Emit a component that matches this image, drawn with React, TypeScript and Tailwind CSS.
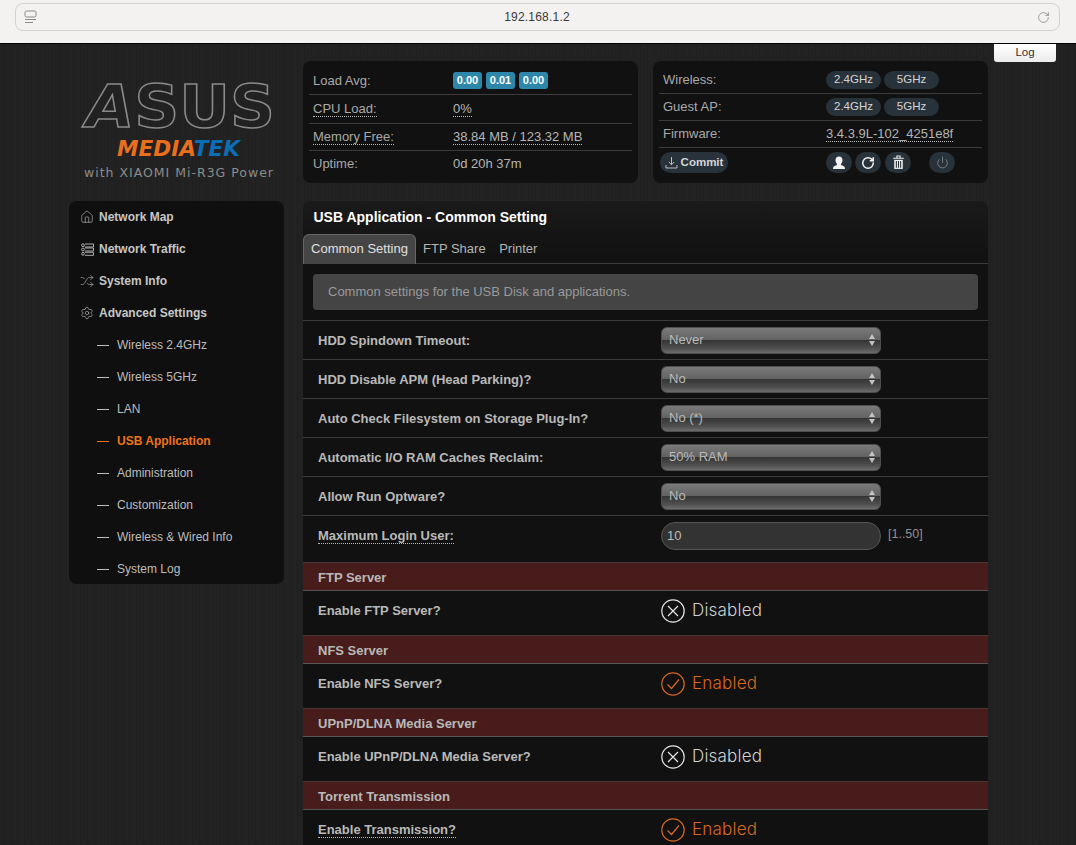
import React from "react";
import { House, Shuffle, Settings, Power, RotateCw } from "lucide-react";

const Dotted = ({ children }: { children: React.ReactNode }) => (
  <span className="inline-block leading-[14px] border-b border-dotted border-[#bbbbbb]">{children}</span>
);

const Badge = ({ v }: { v: string }) => (
  <span className="w-[29px] h-[17px] rounded-[3px] bg-[#2d87ab] text-white font-bold text-[11px] flex items-center justify-center">{v}</span>
);

const Pill = ({ v }: { v: string }) => (
  <span className="w-[55px] h-[18px] rounded-full bg-[#28323a] text-[#d5d5d5] text-[11.5px] flex items-center justify-center">{v}</span>
);

const IconPill = ({ children, cls = "ml-[3px]" }: { children: React.ReactNode; cls?: string }) => (
  <span className={`w-[26px] h-[21px] rounded-full bg-[#28323a] flex items-center justify-center ${cls}`}>{children}</span>
);

const Tick = ({ on }: { on: boolean }) =>
  on ? (
    <svg width="24" height="24" viewBox="0 0 24 24" fill="none" stroke="#d9681f" strokeWidth="1.2">
      <circle cx="12" cy="12" r="11.2" />
      <path d="M6.5 12.5l4 4 7.5-9" />
    </svg>
  ) : (
    <svg width="24" height="24" viewBox="0 0 24 24" fill="none" stroke="#e6e6e6" strokeWidth="1.2">
      <circle cx="12" cy="12" r="11.2" />
      <path d="M7 7l10 10M17 7L7 17" />
    </svg>
  );

const Logo = () => (
  <svg width="215" height="157" viewBox="0 0 215 157" className="block">
    <text x="17" y="83" fontFamily="'DejaVu Sans', sans-serif" fontWeight="700" fontSize="59" textLength="189" lengthAdjust="spacingAndGlyphs" fill="none" stroke="#8a8a8a" strokeWidth="1.5">
      <tspan fontStyle="italic">A</tspan>SUS
    </text>
    <text x="48" y="112" fontFamily="'DejaVu Sans', sans-serif" fontWeight="700" fontStyle="italic" fontSize="20.5" textLength="123" lengthAdjust="spacingAndGlyphs">
      <tspan fill="#ea6f1c">MEDIA</tspan>
      <tspan fill="#0b6db5">TEK</tspan>
    </text>
    <text x="15" y="133" fontFamily="'DejaVu Sans', sans-serif" fontSize="12.5" textLength="189" fill="#8c8c8c">with XIAOMI Mi-R3G Power</text>
  </svg>
);

const RowsIcon = () => (
  <svg width="13" height="13" viewBox="0 0 13 13" fill="none" stroke="#bdbdbd" strokeWidth="0.9">
    <circle cx="2" cy="2.2" r="1.4" />
    <circle cx="2" cy="6.5" r="1.4" />
    <circle cx="2" cy="10.8" r="1.4" />
    <path d="M4 1h8.5v3H4M4 5h8.5v3H4M4 9.300h8.500v3H4" />
  </svg>
);

const topItems = [
  { icon: <House size={14} strokeWidth={1} color="#c8c8c8" />, label: "Network Map" },
  { icon: <RowsIcon />, label: "Network Traffic" },
  { icon: <Shuffle size={14} strokeWidth={1} color="#c8c8c8" />, label: "System Info" },
  { icon: <Settings size={14} strokeWidth={1} color="#c8c8c8" />, label: "Advanced Settings" },
];

const subItems = ["Wireless 2.4GHz", "Wireless 5GHz", "LAN", "USB Application", "Administration", "Customization", "Wireless & Wired Info", "System Log"];

const Sidebar = () => (
  <nav className="w-[215px] rounded-[8px] bg-[#0f0f0f] h-[383px]">
    {topItems.map((t) => (
      <div key={t.label} className="h-[32px] flex items-center pl-[11px] text-[12px] font-bold text-[#c6c6c6]">
        <span className="w-[14px] flex justify-center mr-[5px]">{t.icon}</span>
        {t.label}
      </div>
    ))}
    {subItems.map((s) => {
      const active = s === "USB Application";
      return (
        <div key={s} className={`h-[32px] flex items-center pl-[28px] text-[12px] ${active ? "font-bold text-[#ee7218]" : "text-[#bdbdbd]"}`}>
          <span className={`w-[12px] h-px mr-[8px] ${active ? "bg-[#ee7218]" : "bg-[#bdbdbd]"}`} />
          {s}
        </div>
      );
    })}
  </nav>
);

const InfoRow = ({ label, children, h, last, dotted, col }: { label: string; children: React.ReactNode; h: string; last?: boolean; dotted?: boolean; col: string }) => (
  <div className={`${h} flex items-center ${last ? "" : "border-b border-[#3c3c3c]"}`}>
    <span className={`${col} pl-[4px] text-[#a9a9a9]`}>{dotted ? <Dotted>{label}</Dotted> : label}</span>
    <div className="flex items-center">{children}</div>
  </div>
);

const LoadPanel = () => (
  <section className="w-[335px] h-[122px] rounded-[8px] bg-[#111111] px-[6px] pt-[6px] text-[13px] text-[#b5b5b5]">
    <InfoRow label="Load Avg:" h="h-[28px]" col="w-[144px]">
      <div className="flex gap-[4px]"><Badge v="0.00" /><Badge v="0.01" /><Badge v="0.00" /></div>
    </InfoRow>
    <InfoRow label="CPU Load:" h="h-[29px]" dotted col="w-[144px]"><Dotted>0%</Dotted></InfoRow>
    <InfoRow label="Memory Free:" h="h-[27px]" dotted col="w-[144px]"><Dotted>38.84 MB / 123.32 MB</Dotted></InfoRow>
    <InfoRow label="Uptime:" h="h-[26px]" last col="w-[144px]">0d 20h 37m</InfoRow>
  </section>
);

const StatusPanel = () => (
  <section className="w-[335px] h-[122px] rounded-[8px] bg-[#111111] px-[6px] pt-[5px] text-[13px] text-[#b5b5b5]">
    <InfoRow label="Wireless:" h="h-[28px]" col="w-[167px]">
      <div className="flex gap-[3px]"><Pill v="2.4GHz" /><Pill v="5GHz" /></div>
    </InfoRow>
    <InfoRow label="Guest AP:" h="h-[27px]" col="w-[167px]">
      <div className="flex gap-[3px]"><Pill v="2.4GHz" /><Pill v="5GHz" /></div>
    </InfoRow>
    <InfoRow label="Firmware:" h="h-[27px]" col="w-[167px]"><Dotted>3.4.3.9L-102_4251e8f</Dotted></InfoRow>
    <div className="h-[29px] flex items-center pl-[1px]">
      <span className="w-[68px] h-[21px] rounded-full bg-[#28323a] flex items-center justify-center gap-[3px] text-[#d5d5d5] text-[11.5px] font-bold">
        <svg width="13" height="13" viewBox="0 0 13 13" fill="none" stroke="#cfcfcf" strokeWidth="0.9">
          <path d="M6.500 1v7.500M3.800 6l2.700 2.700L9.200 6M1 9v3h11V9" />
        </svg>
        Commit
      </span>
      <span className="w-[98px]" />
      <IconPill cls="">
        <svg width="14" height="14" viewBox="0 0 14 14" fill="#f2f2f2">
          <path d="M7 0.500c2.300 0 3.500 1.600 3.500 3.800 0 1.500-.7 2.800-1.500 3.600 0 .9.300 1.300 1.400 1.700 1.500.5 2.600 1 2.600 3.400H1c0-2.400 1.100-2.900 2.600-3.400C4.700 9.200 5 8.800 5 7.900 4.200 7.100 3.500 5.800 3.500 4.300 3.500 2.100 4.700.5 7 .5z" />
        </svg>
      </IconPill>
      <IconPill><RotateCw size={14} strokeWidth={2.6} color="#f2f2f2" /></IconPill>
      <IconPill cls="ml-[4px]">
        <svg width="13" height="15" viewBox="0 0 12 14" fill="none" stroke="#eeeeee" strokeWidth="1">
          <path d="M1 3h10M4.500 3V1h3v2" />
          <path d="M2 4.500h8V13H2z" fill="#eeeeee" stroke="none" />
          <path d="M4 5.500v6.500M6 5.500v6.500M8 5.500v6.500" stroke="#28323a" />
        </svg>
      </IconPill>
      <IconPill cls="ml-[18px]"><Power size={13} strokeWidth={1} color="#b8b8b8" /></IconPill>
    </div>
  </section>
);

const Select = ({ v }: { v: string }) => (
  <div className="w-[220px] h-[27px] rounded-[6px] border border-[#4e4e4e] bg-[linear-gradient(180deg,#7a7a7a_0%,#626262_48%,#363636_50%,#4e4e4e_80%,#6c6c6c_100%)] flex items-center justify-between pl-[7px] pr-[5px] text-[13px] text-[#b9b9b9]">
    <span>{v}</span>
    <span className="flex flex-col gap-[2px]">
      <span className="w-0 h-0 border-x-[3px] border-x-transparent border-b-[5px] border-b-[#c4c4c4]" />
      <span className="w-0 h-0 border-x-[3px] border-x-transparent border-t-[5px] border-t-[#c4c4c4]" />
    </span>
  </div>
);

const Label = ({ children, dotted, cls = "" }: { children: string; dotted?: boolean; cls?: string }) => (
  <span className={`w-[343px] shrink-0 text-[13px] font-bold text-[#b9b9b9] ${cls}`}>{dotted ? <Dotted>{children}</Dotted> : children}</span>
);

const SelectRow = ({ label, v }: { label: string; v: string }) => (
  <div className="h-[39px] flex items-center pl-[15px] border-t border-[#3c3c3c]">
    <Label cls="translate-y-px">{label}</Label>
    <Select v={v} />
  </div>
);

const Section = ({ title }: { title: string }) => (
  <div className="h-[29px] flex items-center pl-[15px] pt-[2px] bg-[#481c1b] border-t border-t-[#4a3434] border-b border-b-[#555555] text-[13px] font-bold text-[#b9b9b9]">{title}</div>
);

const ToggleRow = ({ label, on, dotted }: { label: string; on: boolean; dotted?: boolean }) => (
  <div className="h-[44px] flex items-center pl-[15px] pb-[5px]">
    <Label dotted={dotted}>{label}</Label>
    <Tick on={on} />
    <span className={`ml-[7px] font-['Inter',sans-serif] font-light text-[17px] tracking-[0.2px] ${on ? "text-[#d9681f]" : "text-[#d0d0d0]"}`}>{on ? "Enabled" : "Disabled"}</span>
  </div>
);

const MainPanel = () => (
  <main className="w-[685px] rounded-t-[8px] bg-[linear-gradient(180deg,#1a1a1a_0px,#111111_60px)] bg-[#111111]">
    <h1 className="h-[33px] flex items-center pl-[10.500px] text-[14px] font-bold text-white">USB Application - Common Setting</h1>
    <div className="h-[30px] flex border-b border-[#3c3c3c] text-[13px] text-[#b5b5b5]">
      <span className="w-[113px] h-[30px] pb-px rounded-t-[6px] border border-b-0 border-[#666666] bg-[#454545] flex items-center justify-center text-[#e0e0e0]">Common Setting</span>
      <span className="ml-[7px] flex items-center">FTP Share</span>
      <span className="ml-[13.500px] flex items-center">Printer</span>
    </div>
    <div className="mx-[10px] mt-[10px] mb-[10px] h-[36px] rounded-[4px] bg-[#444444] flex items-center pl-[15px] text-[13px] text-[#9a9a9a]">Common settings for the USB Disk and applications.</div>
    <SelectRow label="HDD Spindown Timeout:" v="Never" />
    <SelectRow label="HDD Disable APM (Head Parking)?" v="No" />
    <SelectRow label="Auto Check Filesystem on Storage Plug-In?" v="No (*)" />
    <SelectRow label="Automatic I/O RAM Caches Reclaim:" v="50% RAM" />
    <SelectRow label="Allow Run Optware?" v="No" />
    <div className="h-[47px] flex items-center pl-[15px] pb-[7px] border-t border-[#3c3c3c]">
      <Label dotted>Maximum Login User:</Label>
      <div className="w-[220px] h-[28px] rounded-full border border-[#555555] bg-[#333333] flex items-center pl-[5px] text-[13px] text-[#bbbbbb]">10</div>
      <span className="ml-[7px] -translate-y-px text-[12.500px] text-[#8f8f8f]">[1..50]</span>
    </div>
    <Section title="FTP Server" />
    <ToggleRow label="Enable FTP Server?" on={false} />
    <Section title="NFS Server" />
    <ToggleRow label="Enable NFS Server?" on />
    <Section title="UPnP/DLNA Media Server" />
    <ToggleRow label="Enable UPnP/DLNA Media Server?" on={false} />
    <Section title="Torrent Transmission" />
    <ToggleRow label="Enable Transmission?" on dotted />
  </main>
);

export default function App() {
  return (
    <div className="relative h-[845px] overflow-hidden flex flex-col bg-[#232323] bg-[repeating-linear-gradient(90deg,#262626_0px,#1f1f1f_1px,#252525_2px,#1e1e1e_3px,#232323_5px,#202020_7px)] font-['Liberation_Sans',Arial,sans-serif]">
      <header className="h-[44px] shrink-0 bg-[#f3f2f0] border-b border-black flex items-start pl-[15px] pr-[16px] pt-[3px]">
        <div className="w-full h-[28px] rounded-[8px] border border-[#d4d3d1] flex items-center justify-between pl-[8px] pr-[9px]">
          <svg width="13" height="14" viewBox="0 0 13 14" fill="none" stroke="#8a8a8a" strokeWidth="1">
            <rect x="1" y="1" width="11" height="6" rx="1.500" />
            <path d="M1 9.500h11M1 12.500h8" />
          </svg>
          <span className="text-[12px] text-[#3a3a3a] tracking-[0.2px]">192.168.1.2</span>
          <RotateCw size={13} strokeWidth={1} color="#5a5a5a" />
        </div>
      </header>
      <button className="absolute left-[994px] top-[44px] w-[62px] h-[18px] rounded-b-[3px] bg-[linear-gradient(180deg,#ffffff,#ececec)] text-[11.500px] text-[#333333]">Log</button>
      <div className="flex pl-[69px] gap-[19px]">
        <aside className="w-[215px] shrink-0">
          <Logo />
          <Sidebar />
        </aside>
        <div className="w-[685px] pt-[17px] flex flex-col gap-[18px]">
          <div className="flex gap-[15px]">
            <LoadPanel />
            <StatusPanel />
          </div>
          <MainPanel />
        </div>
      </div>
    </div>
  );
}
